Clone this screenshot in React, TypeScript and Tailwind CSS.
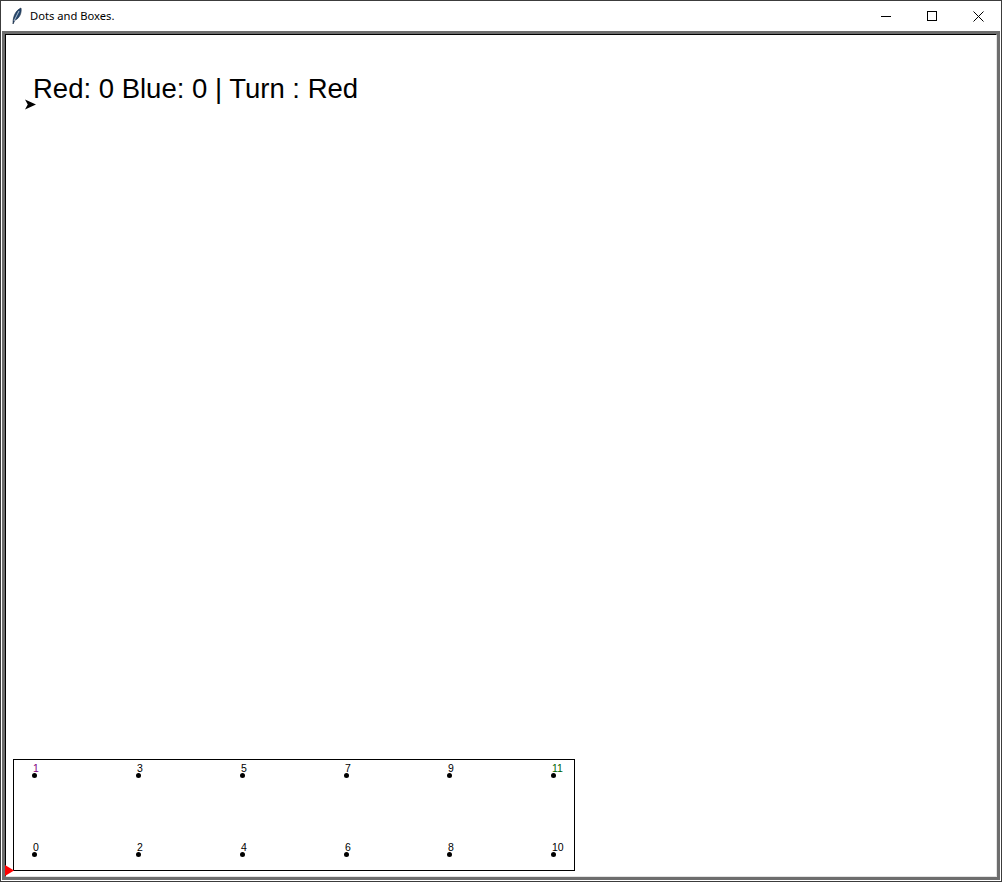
const top = [
  { n: '1', x: 34, c: 'text-[#800080]' },
  { n: '3', x: 138, c: 'text-black' },
  { n: '5', x: 242, c: 'text-black' },
  { n: '7', x: 346, c: 'text-black' },
  { n: '9', x: 449, c: 'text-black' },
  { n: '11', x: 553, c: 'text-[#006400]' },
]

const bottom = [
  { n: '0', x: 34, c: 'text-black' },
  { n: '2', x: 138, c: 'text-black' },
  { n: '4', x: 242, c: 'text-black' },
  { n: '6', x: 346, c: 'text-black' },
  { n: '8', x: 449, c: 'text-black' },
  { n: '10', x: 553, c: 'text-black' },
]

function Dot({ n, x, y, c }: { n: string; x: number; y: number; c: string }) {
  return (
    <>
      <div
        className="absolute h-[5px] w-[5px] rounded-full bg-black"
        style={{ left: x - 2, top: y - 2 }}
      />
      <span
        className={`absolute text-[10.5px] leading-[12px] ${c}`}
        style={{ left: x - 1, top: y - 13 }}
      >
        {n}
      </span>
    </>
  )
}

export default function App() {
  return (
    <div className="flex h-[882px] w-[1002px] flex-col overflow-hidden border border-[#3c3c3c] bg-white font-['Liberation_Sans',sans-serif] text-black">
      <div className="flex h-[30px] flex-none items-center bg-white">
        <svg viewBox="0 0 12 18" className="ml-[10px] h-[18px] w-[12px]">
          <path d="M2 16 C2 9 5 3 10 1 C11 6 8 12 4 13 L2 17 Z" fill="#24476e" stroke="#10233a" strokeWidth="0.6" />
          <path d="M3 14 L8 4" stroke="#d5dee8" strokeWidth="0.8" />
        </svg>
        <span className="ml-[7px] font-['Noto_Sans',sans-serif] text-[11.2px] leading-none">Dots and Boxes.</span>
        <div className="ml-auto flex h-full">
          <div className="flex w-[46px] items-center justify-center">
            <svg viewBox="0 0 10 1" className="h-px w-[10px]">
              <rect width="10" height="1" fill="#000" />
            </svg>
          </div>
          <div className="flex w-[46px] items-center justify-center">
            <svg viewBox="0 0 10 10" className="h-[10px] w-[10px]">
              <rect x="0.5" y="0.5" width="9" height="9" fill="none" stroke="#000" />
            </svg>
          </div>
          <div className="flex w-[46px] items-center justify-center">
            <svg viewBox="0 0 11 11" className="h-[11px] w-[11px]">
              <path d="M0.5 0.5 L10.5 10.5 M10.5 0.5 L0.5 10.5" stroke="#000" strokeWidth="1" fill="none" />
            </svg>
          </div>
        </div>
      </div>
      <div className="mx-px mb-px flex-1 border-[3px] border-[#6d6d6d]">
        <div className="relative h-full w-full border border-t-black border-l-black border-r-[#e3e3e3] border-b-[#e3e3e3] bg-white">
          <span className="absolute top-[37px] left-[27px] whitespace-nowrap text-[27.5px] leading-[34px]">
            Red: 0 Blue: 0 | Turn : Red
          </span>
          <svg viewBox="0 0 12 11" className="absolute top-[64px] left-[19px] h-[11px] w-[11px]">
            <path d="M0 0 L12 5.5 L0 11 L3 5.5 Z" fill="#000" />
          </svg>

          <div className="absolute top-[724px] left-[7px] h-[112px] w-[562px] border border-black" />
          {top.map((d) => (
            <Dot key={d.n} n={d.n} x={d.x - 6} y={740} c={d.c} />
          ))}
          {bottom.map((d) => (
            <Dot key={d.n} n={d.n} x={d.x - 6} y={819} c={d.c} />
          ))}
          <svg viewBox="0 0 9 11" className="absolute top-[830px] left-[-1px] h-[11px] w-[9px]">
            <path d="M0 0 L9 5.5 L0 11 Z" fill="#f00" />
          </svg>
        </div>
      </div>
    </div>
  )
}
